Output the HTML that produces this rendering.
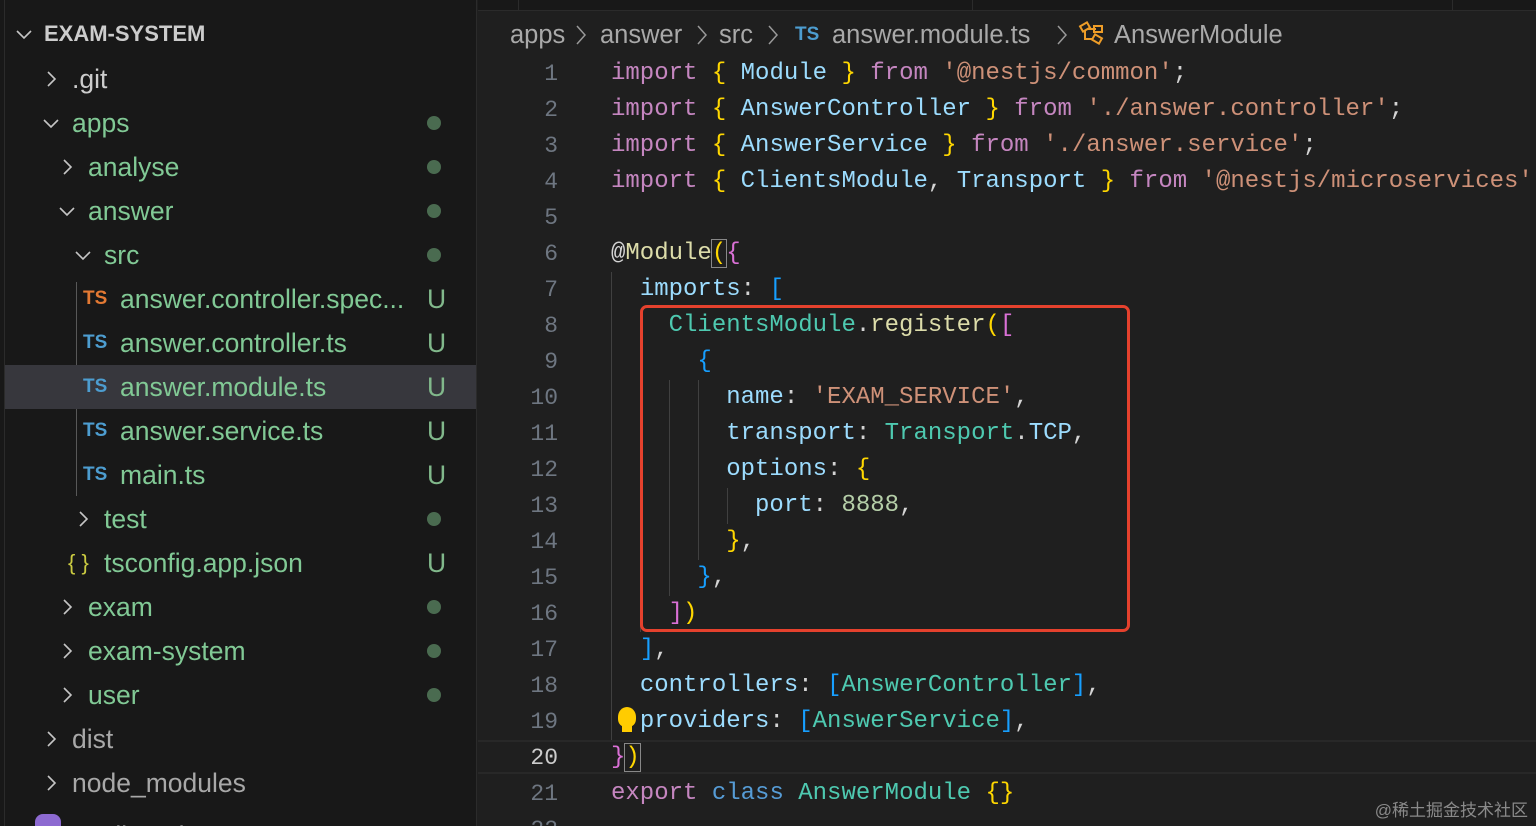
<!DOCTYPE html>
<html><head><meta charset="utf-8">
<style>
*{margin:0;padding:0;box-sizing:border-box}
html,body{width:1536px;height:826px;overflow:hidden}
body{background:#1f1f1f;position:relative;font-family:"Liberation Sans",sans-serif}
#side{position:absolute;left:0;top:0;width:477px;height:826px;background:#181818;border-right:1px solid #2b2b2b;overflow:hidden}
#side .edge{position:absolute;left:4px;top:0;width:1px;height:826px;background:#2b2b2b}
.row{position:absolute;left:5px;width:471px;height:44px;font-size:26.5px;line-height:44px;color:#81c995;white-space:nowrap}
.row span{position:absolute}
.row svg{position:absolute;top:13px}
.dot{position:absolute;left:422px;top:15px;width:14px;height:14px;border-radius:50%;background:#4a6b50}
.u{left:422px;color:#81b88b}
.ts{color:#4d9dd0;font-size:19px;font-weight:bold}
#code{position:absolute;left:478px;top:0;right:0;bottom:0;overflow:hidden}
.ln{position:absolute;left:0;width:80px;text-align:right;font-family:"Liberation Mono",monospace;font-size:23px;color:#6e7681;height:36px;line-height:36px}
.cl{position:absolute;left:133px;font-family:"Liberation Mono",monospace;font-size:24px;height:36px;line-height:36px;white-space:pre;color:#d4d4d4}
.k{color:#c586c0}.y{color:#ffd700}.v{color:#9cdcfe}.s{color:#ce9178}.t{color:#4ec9b0}.b{color:#179fff}.m{color:#da70d6}.n{color:#b5cea8}.kw{color:#569cd6}
.guide{position:absolute;width:1px;background:#404040}
.bc{position:absolute;top:18px;font-size:25.5px;line-height:34px;color:#a9a9a9;white-space:nowrap}
</style></head><body>
<svg width="0" height="0" style="position:absolute"><defs>
<symbol id="cr" viewBox="0 0 18 18"><path d="M6 2 L13 9 L6 16" fill="none" stroke="#c5c5c5" stroke-width="1.6"/></symbol>
<symbol id="cd" viewBox="0 0 18 18"><path d="M2 6 L9 13 L16 6" fill="none" stroke="#c5c5c5" stroke-width="1.6"/></symbol>
</defs></svg>
<div id="side"><div class="edge"></div>
<div class="row" style="top:12px;color:#cccccc;font-weight:bold;font-size:22px"><svg width="18" height="18" style="left:10px"><use href="#cd"/></svg><span style="left:39px">EXAM-SYSTEM</span></div>
<div class="row" style="top:57px;color:#cccccc"><svg width="18" height="18" style="left:37px"><use href="#cr"/></svg><span style="left:67px">.git</span></div>
<div class="row" style="top:101px"><svg width="18" height="18" style="left:37px"><use href="#cd"/></svg><span style="left:67px">apps</span><div class="dot"></div></div>
<div class="row" style="top:145px"><svg width="18" height="18" style="left:53px"><use href="#cr"/></svg><span style="left:83px">analyse</span><div class="dot"></div></div>
<div class="row" style="top:189px"><svg width="18" height="18" style="left:53px"><use href="#cd"/></svg><span style="left:83px">answer</span><div class="dot"></div></div>
<div class="row" style="top:233px"><svg width="18" height="18" style="left:69px"><use href="#cd"/></svg><span style="left:99px">src</span><div class="dot"></div></div>
<div style="position:absolute;left:76px;top:282px;width:1px;height:214px;background:#585858"></div>
<div class="row" style="top:277px"><span class="ts" style="left:78px;color:#e37933">TS</span><span style="left:115px">answer.controller.spec...</span><span class="u">U</span></div>
<div class="row" style="top:321px"><span class="ts" style="left:78px">TS</span><span style="left:115px">answer.controller.ts</span><span class="u">U</span></div>
<div class="row" style="top:365px;background:#37373d"><span class="ts" style="left:78px">TS</span><span style="left:115px">answer.module.ts</span><span class="u">U</span></div>
<div class="row" style="top:409px"><span class="ts" style="left:78px">TS</span><span style="left:115px">answer.service.ts</span><span class="u">U</span></div>
<div class="row" style="top:453px"><span class="ts" style="left:78px">TS</span><span style="left:115px">main.ts</span><span class="u">U</span></div>
<div class="row" style="top:497px"><svg width="18" height="18" style="left:69px"><use href="#cr"/></svg><span style="left:99px">test</span><div class="dot"></div></div>
<div class="row" style="top:541px"><span style="left:63px;color:#cbcb41;font-size:22px">{ }</span><span style="left:99px">tsconfig.app.json</span><span class="u">U</span></div>
<div class="row" style="top:585px"><svg width="18" height="18" style="left:53px"><use href="#cr"/></svg><span style="left:83px">exam</span><div class="dot"></div></div>
<div class="row" style="top:629px"><svg width="18" height="18" style="left:53px"><use href="#cr"/></svg><span style="left:83px">exam-system</span><div class="dot"></div></div>
<div class="row" style="top:673px"><svg width="18" height="18" style="left:53px"><use href="#cr"/></svg><span style="left:83px">user</span><div class="dot"></div></div>
<div class="row" style="top:717px;color:#a8a8a8"><svg width="18" height="18" style="left:37px"><use href="#cr"/></svg><span style="left:67px">dist</span></div>
<div class="row" style="top:761px;color:#a8a8a8"><svg width="18" height="18" style="left:37px"><use href="#cr"/></svg><span style="left:67px">node_modules</span></div>
<div class="row" style="top:814px"><span style="left:30px;top:0px;width:26px;height:26px;border-radius:8px 8px 0 0;background:#8d6ad1"></span><span style="left:75px;color:#d4d4d4">.eslintrc.js</span><span class="u">U</span></div>
</div>

<div id="code">
<div style="position:absolute;left:0;top:0;right:0;height:11px;background:#181818;border-bottom:1px solid #2b2b2b"></div>
<div style="position:absolute;left:40px;top:0;width:1px;height:11px;background:#2b2b2b"></div>
<div style="position:absolute;left:494px;top:0;width:1px;height:11px;background:#2b2b2b"></div>
<div style="position:absolute;left:974px;top:0;width:1px;height:11px;background:#2b2b2b"></div>
<span class="bc" style="left:32px">apps</span>
<svg width="14" height="22" style="position:absolute;left:96px;top:24px"><path d="M3 2 L11 11 L3 20" fill="none" stroke="#999" stroke-width="1.5"/></svg>
<span class="bc" style="left:122px">answer</span>
<svg width="14" height="22" style="position:absolute;left:217px;top:24px"><path d="M3 2 L11 11 L3 20" fill="none" stroke="#999" stroke-width="1.5"/></svg>
<span class="bc" style="left:241px">src</span>
<svg width="14" height="22" style="position:absolute;left:288px;top:24px"><path d="M3 2 L11 11 L3 20" fill="none" stroke="#999" stroke-width="1.5"/></svg>
<span class="bc" style="left:317px;color:#4d9dd0;font-size:19px;font-weight:bold">TS</span>
<span class="bc" style="left:354px">answer.module.ts</span>
<svg width="14" height="22" style="position:absolute;left:577px;top:24px"><path d="M3 2 L11 11 L3 20" fill="none" stroke="#999" stroke-width="1.5"/></svg>
<svg width="28" height="28" style="position:absolute;left:600px;top:21px" viewBox="0 0 28 28" fill="none" stroke="#ee9d28" stroke-width="2"><rect x="3" y="3" width="8" height="6" transform="rotate(-30 7 6)"/><path d="M7 10 L7 18 L15 18 M10 8 L18 8"/><rect x="16" y="5" width="8" height="6"/><rect x="15" y="15" width="8" height="6" transform="rotate(30 19 18)"/></svg>
<span class="bc" style="left:636px">AnswerModule</span>

<div style="position:absolute;left:0;right:0;top:740px;height:34px;border-top:2px solid #282828;border-bottom:2px solid #282828"></div>

<div class="guide" style="left:133px;top:272px;height:468px"></div>
<div class="guide" style="left:162px;top:344px;height:288px"></div>
<div class="guide" style="left:191px;top:380px;height:216px"></div>
<div class="guide" style="left:220px;top:380px;height:180px"></div>
<div class="guide" style="left:249px;top:488px;height:36px"></div>

<div class="ln" style="top:56px">1</div><div class="cl" style="top:56px"><span class="k">import</span> <span class="y">{</span> <span class="v">Module</span> <span class="y">}</span> <span class="k">from</span> <span class="s">'@nestjs/common'</span>;</div>
<div class="ln" style="top:92px">2</div><div class="cl" style="top:92px"><span class="k">import</span> <span class="y">{</span> <span class="v">AnswerController</span> <span class="y">}</span> <span class="k">from</span> <span class="s">'./answer.controller'</span>;</div>
<div class="ln" style="top:128px">3</div><div class="cl" style="top:128px"><span class="k">import</span> <span class="y">{</span> <span class="v">AnswerService</span> <span class="y">}</span> <span class="k">from</span> <span class="s">'./answer.service'</span>;</div>
<div class="ln" style="top:164px">4</div><div class="cl" style="top:164px"><span class="k">import</span> <span class="y">{</span> <span class="v">ClientsModule</span>, <span class="v">Transport</span> <span class="y">}</span> <span class="k">from</span> <span class="s">'@nestjs/microservices'</span>;</div>
<div class="ln" style="top:200px">5</div>
<div class="ln" style="top:236px">6</div><div class="cl" style="top:236px">@<span style="color:#dcdcaa">Module</span><span class="y" style="outline:1px solid #888">(</span><span class="m">{</span></div>
<div class="ln" style="top:272px">7</div><div class="cl" style="top:272px">  <span class="v">imports</span>: <span class="b">[</span></div>
<div class="ln" style="top:308px">8</div><div class="cl" style="top:308px">    <span class="t">ClientsModule</span>.<span style="color:#dcdcaa">register</span><span class="y">(</span><span class="m">[</span></div>
<div class="ln" style="top:344px">9</div><div class="cl" style="top:344px">      <span class="b">{</span></div>
<div class="ln" style="top:380px">10</div><div class="cl" style="top:380px">        <span class="v">name</span>: <span class="s">'EXAM_SERVICE'</span>,</div>
<div class="ln" style="top:416px">11</div><div class="cl" style="top:416px">        <span class="v">transport</span>: <span class="t">Transport</span>.<span class="v">TCP</span>,</div>
<div class="ln" style="top:452px">12</div><div class="cl" style="top:452px">        <span class="v">options</span>: <span class="y">{</span></div>
<div class="ln" style="top:488px">13</div><div class="cl" style="top:488px">          <span class="v">port</span>: <span class="n">8888</span>,</div>
<div class="ln" style="top:524px">14</div><div class="cl" style="top:524px">        <span class="y">}</span>,</div>
<div class="ln" style="top:560px">15</div><div class="cl" style="top:560px">      <span class="b">}</span>,</div>
<div class="ln" style="top:596px">16</div><div class="cl" style="top:596px">    <span class="m">]</span><span class="y">)</span></div>
<div class="ln" style="top:632px">17</div><div class="cl" style="top:632px">  <span class="b">]</span>,</div>
<div class="ln" style="top:668px">18</div><div class="cl" style="top:668px">  <span class="v">controllers</span>: <span class="b">[</span><span class="t">AnswerController</span><span class="b">]</span>,</div>
<div class="ln" style="top:704px">19</div><div class="cl" style="top:704px">  <span class="v">providers</span>: <span class="b">[</span><span class="t">AnswerService</span><span class="b">]</span>,</div>
<div style="position:absolute;left:140px;top:707px;width:18px;height:20px;border-radius:50% 50% 40% 40%;background:#ffcc00"></div>
<div style="position:absolute;left:144px;top:726px;width:10px;height:6px;background:#ffcc00"></div>
<div class="ln" style="top:740px;color:#cccccc">20</div><div class="cl" style="top:740px"><span class="m">}</span><span class="y" style="outline:1px solid #888">)</span></div>
<div class="ln" style="top:776px">21</div><div class="cl" style="top:776px"><span class="k">export</span> <span class="kw">class</span> <span class="t">AnswerModule</span> <span class="y">{}</span></div>
<div class="ln" style="top:812px">22</div>

<div style="position:absolute;left:162px;top:305px;width:490px;height:327px;border:3px solid #e5412d;border-radius:7px"></div>
<div style="position:absolute;right:8px;top:796px;font-family:'Liberation Sans','Noto Sans CJK SC',sans-serif;font-size:17px;color:#8a8a8a">@稀土掘金技术社区</div>
</div>
</body></html>
